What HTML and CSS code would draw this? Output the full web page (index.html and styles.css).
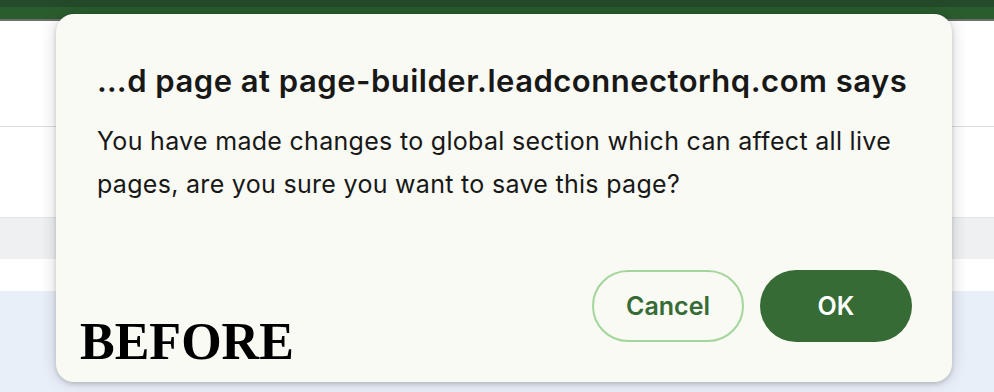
FILE: index.html
```html
<!DOCTYPE html>
<html lang="en">
<head>
  <meta charset="UTF-8" />
  <title>Save page</title>
  <link rel="stylesheet" href="styles.css">
</head>
<body>
  <div class="page">
    <div class="topbar">
      <div class="topbar-dark"></div>
      <div class="topbar-light"></div>
    </div>
    <div class="panel panel-top"></div>
    <div class="panel panel-mid"></div>
    <div class="strip"></div>
    <div class="panel panel-low"></div>
    <div class="canvas"></div>
  </div>

  <div class="dialog">
    <h1 class="dialog-title">…d page at page-builder.leadconnectorhq.com says</h1>
    <p class="dialog-text">You have made changes to global section which can affect all live pages, are you sure you want to save this page?</p>
    <div class="dialog-actions">
      <button class="btn btn-cancel">Cancel</button>
      <button class="btn btn-ok">OK</button>
    </div>
  </div>

  <div class="stamp">BEFORE</div>
</body>
</html>
```

FILE: styles.css
```css
html, body {
  margin: 0;
  padding: 0;
}

body {
  width: 994px;
  height: 392px;
  overflow: hidden;
  position: relative;
  font-family: Inter, "Liberation Sans", Arial, sans-serif;
  background: #fff;
}

.page {
  display: flex;
  flex-direction: column;
  height: 100%;
}

.topbar-dark {
  height: 7px;
  background: #244a29;
}

.topbar-light {
  height: 12px;
  background: #2a5d2e;
  border-bottom: 2px solid #6b6f6b;
}

.panel {
  background: #fff;
}

.panel-top {
  height: 105px;
  border-bottom: 1px solid #dcdcdc;
}

.panel-mid {
  height: 90px;
}

.strip {
  height: 41px;
  background: #eef0f2;
  border-top: 1px solid #e2e4e7;
}

.panel-low {
  height: 32px;
}

.canvas {
  flex: 1;
  background: #e9eff9;
}

/* dialog sits on top of the page */
.dialog {
  position: absolute;
  left: 56px;
  top: 14px;
  width: 896px;
  height: 368px;
  box-sizing: border-box;
  padding: 40px 40px 40px 41px;
  background: #f9faf3;
  border-radius: 18px;
  box-shadow: 0 0 16px rgba(0, 0, 0, 0.18), 0 2px 4px rgba(0, 0, 0, 0.15);
  display: flex;
  flex-direction: column;
}

.dialog-title {
  margin: 10px 0 0;
  font-size: 31px;
  line-height: 34px;
  font-weight: 600;
  letter-spacing: 0.5px;
  color: #181818;
  white-space: nowrap;
}

.dialog-text {
  margin: 22px 0 0;
  font-size: 25px;
  line-height: 43px;
  letter-spacing: 0.3px;
  color: #181818;
}

.dialog-actions {
  margin-top: auto;
  display: flex;
  justify-content: flex-end;
  gap: 16px;
}

.btn {
  width: 152px;
  height: 72px;
  border-radius: 36px;
  font-family: Inter, "Liberation Sans", Arial, sans-serif;
  font-size: 25px;
  font-weight: 600;
  cursor: pointer;
}

.btn-cancel {
  background: transparent;
  border: 2px solid #a3d69c;
  color: #366b37;
}

.btn-ok {
  background: #366b35;
  border: none;
  color: #fff;
}

.stamp {
  position: absolute;
  left: 80px;
  top: 312px;
  font-family: "Liberation Serif", "Times New Roman", serif;
  font-weight: bold;
  font-size: 52px;
  line-height: 60px;
  color: #000;
}
```
